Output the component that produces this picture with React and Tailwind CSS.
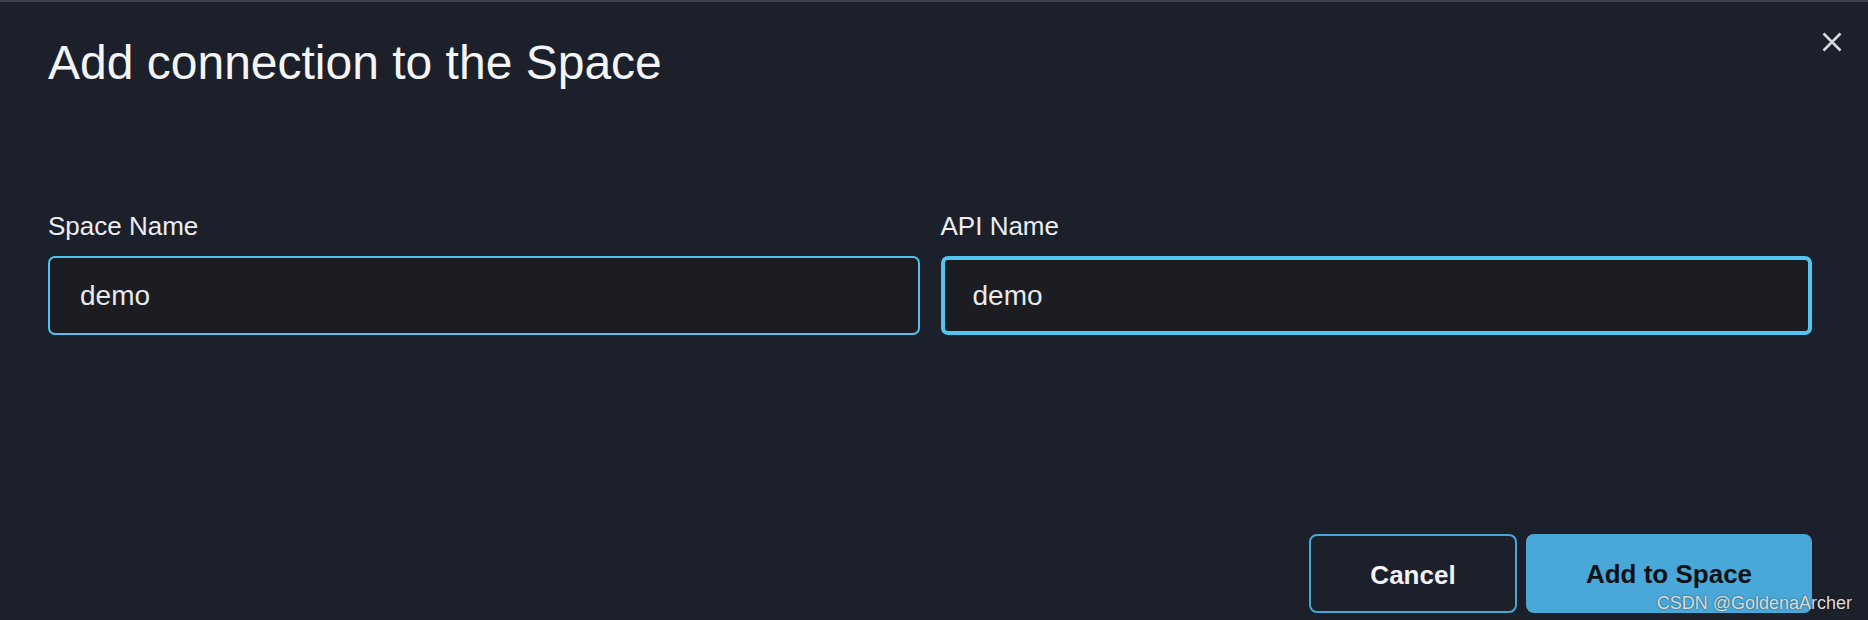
import React from "react";

export default function App() {
  return (
    <div className="relative w-[1868px] h-[620px] overflow-hidden bg-[#1b202a] border-t-2 border-[#3b4049] pl-[48px] pr-[56px] pt-[37px] font-['Liberation_Sans',Arial,sans-serif]">
      <h1 className="text-[48px] leading-[48px] font-normal text-[#f4f5f7]">
        Add connection to the Space
      </h1>

      <button
        aria-label="Close"
        className="absolute right-[26px] top-[30px] w-[20px] h-[20px] text-[#d6d9de]"
      >
        <svg width="20" height="20" viewBox="0 0 20 20" fill="none" stroke="currentColor" strokeWidth="2.6">
          <path d="M1.5 1.5 L18.5 18.5 M18.5 1.5 L1.5 18.5" />
        </svg>
      </button>

      <div className="mt-[126px] grid grid-cols-2 gap-x-[21px]">
        <div>
          <label className="block text-[26px] leading-[26px] mb-[17px] text-[#eceef1]">
            Space Name
          </label>
          <input
            readOnly
            value="demo"
            className="block w-full h-[79px] rounded-[7px] border-2 border-[#4fc3f1] bg-[#1b1d22] pl-[30px] text-[28px] text-[#e8e9eb] outline-none"
          />
        </div>
        <div>
          <label className="block text-[26px] leading-[26px] mb-[17px] text-[#eceef1]">
            API Name
          </label>
          <input
            readOnly
            value="demo"
            className="block w-full h-[79px] rounded-[7px] border-4 border-[#52c6f3] bg-[#1b1d22] pl-[28px] text-[28px] text-[#e8e9eb] outline-none"
          />
        </div>
      </div>

      <div className="mt-[199px] flex justify-end gap-[9px]">
        <button className="w-[208px] h-[79px] rounded-[8px] border-2 border-[#4aa5d6] bg-transparent pt-[3px] text-[26px] font-bold text-[#f2f3f5]">
          Cancel
        </button>
        <button className="w-[286px] h-[79px] rounded-[8px] bg-[#4aa8d8] pt-[2px] text-[26px] font-bold text-[#101216]">
          Add to Space
        </button>
      </div>

      <div className="absolute right-[16px] bottom-[8px] text-[18px] leading-[18px] text-[#dcdcdc] [text-shadow:0_0_2px_rgba(0,0,0,0.6)]">
        CSDN @GoldenaArcher
      </div>
    </div>
  );
}
